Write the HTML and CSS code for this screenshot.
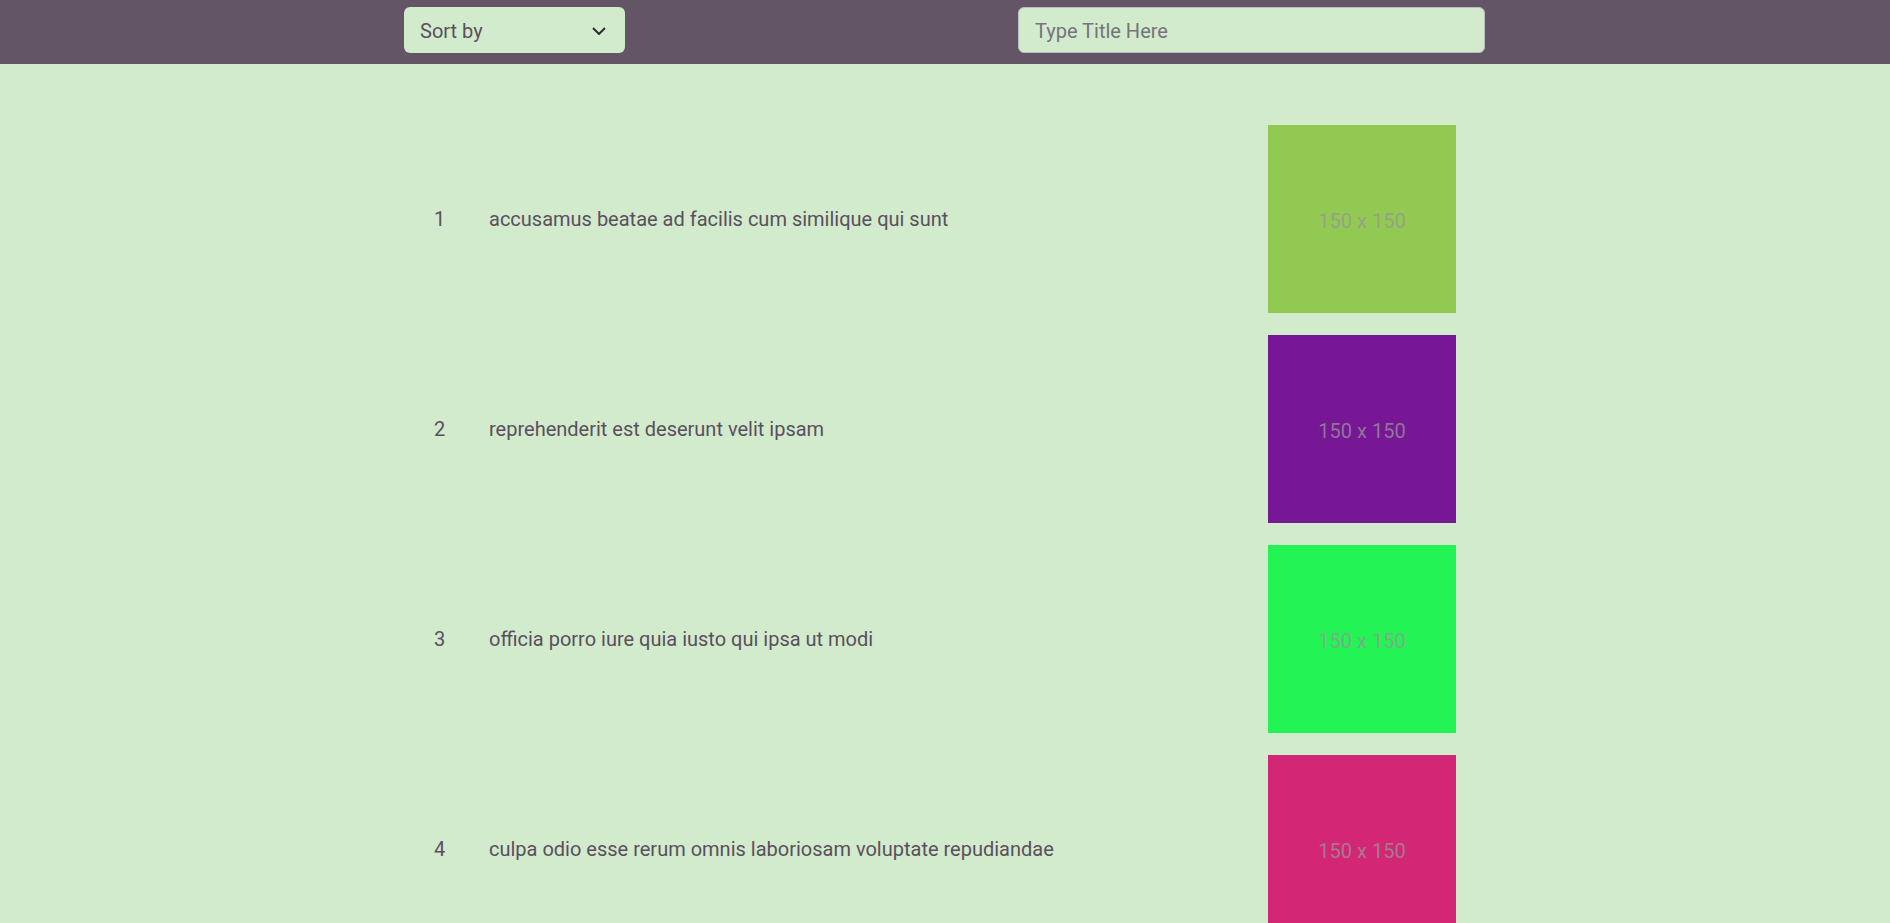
FILE: index.html
```html
<!DOCTYPE html>
<html>
<head>
<meta charset="utf-8">
<link rel="stylesheet" href="styles.css">
</head>
<body>
<header class="topbar">
  <div class="topbar-inner">
    <div class="sort-select">
      <span>Sort by</span>
      <svg class="chevron" width="14" height="8" viewBox="0 0 14 8"><path d="M1 1 L7 7 L13 1" fill="none" stroke="#2f2a33" stroke-width="2"/></svg>
    </div>
    <input class="title-input" type="text" placeholder="Type Title Here">
  </div>
</header>
<main class="list">
  <div class="row">
    <div class="num">1</div>
    <div class="title">accusamus beatae ad facilis cum similique qui sunt</div>
    <div class="thumb c1"><span>150 x 150</span></div>
  </div>
  <div class="row">
    <div class="num">2</div>
    <div class="title">reprehenderit est deserunt velit ipsam</div>
    <div class="thumb c2"><span>150 x 150</span></div>
  </div>
  <div class="row">
    <div class="num">3</div>
    <div class="title">officia porro iure quia iusto qui ipsa ut modi</div>
    <div class="thumb c3"><span>150 x 150</span></div>
  </div>
  <div class="row">
    <div class="num">4</div>
    <div class="title">culpa odio esse rerum omnis laboriosam voluptate repudiandae</div>
    <div class="thumb c4"><span>150 x 150</span></div>
  </div>
</main>
</body>
</html>
```
FILE: styles.css
```css
html, body {
  margin: 0;
  padding: 0;
  background: #d2ebcd;
  font-family: Roboto, "Liberation Sans", sans-serif;
  color: #5b4f5e;
  overflow: hidden;
}
.topbar {
  background: #635566;
  height: 64px;
}
.topbar-inner {
  width: 1082px;
  margin: 0 auto;
  padding-top: 7px;
  display: flex;
  justify-content: space-between;
}
.sort-select {
  box-sizing: border-box;
  width: 221px;
  height: 46px;
  background: #d2ebcd;
  border-radius: 6px;
  padding: 2px 19px 0 16px;
  display: flex;
  align-items: center;
  justify-content: space-between;
  font-size: 20px;
  color: #5b4f5e;
}
.chevron {
  display: block;
}
.title-input {
  box-sizing: border-box;
  width: 467px;
  height: 46px;
  margin: 0 1px 0 0;
  background: #d2ebcd;
  border: 1px solid #b9bcc0;
  border-radius: 6px;
  padding: 2px 16px 0;
  font-family: Roboto, "Liberation Sans", sans-serif;
  font-size: 20px;
  color: #5b4f5e;
  outline: none;
}
.title-input::placeholder {
  color: #76737c;
}
.list {
  width: 1082px;
  margin: 0 auto;
  padding-top: 61px;
  display: flex;
  flex-direction: column;
  gap: 22px;
}
.row {
  display: flex;
  align-items: center;
  padding-left: 30px;
  padding-right: 30px;
  font-size: 20px;
}
.num {
  width: 55px;
}
.title {
  flex: 1;
}
.thumb {
  width: 188px;
  height: 188px;
  display: flex;
  align-items: center;
  justify-content: center;
  padding-top: 4px;
  box-sizing: border-box;
}
.thumb span {
  font-family: Roboto, "Liberation Sans", sans-serif;
  font-size: 20px;
  color: rgba(150, 150, 150, 0.75);
}
.c1 { background: #92c952; }
.c2 { background: #771796; }
.c3 { background: #24f355; }
.c4 { background: #d32776; }
```
